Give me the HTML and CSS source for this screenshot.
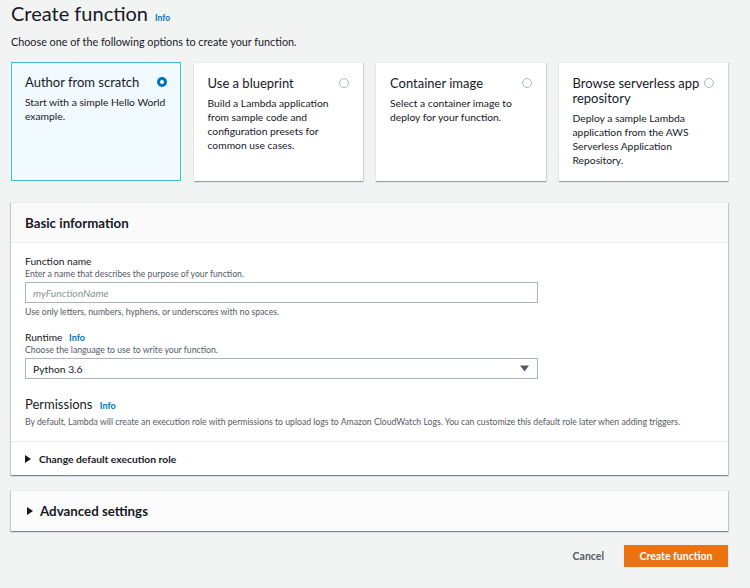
FILE: index.html
```html
<!DOCTYPE html>
<html lang="en">
<head>
<meta charset="utf-8">
<title>Create function</title>
<link rel="stylesheet" href="styles.css">
</head>
<body>
<div class="page">
  <header class="page-head">
    <h1 class="title">Create function <a class="info info-title" href="#">Info</a></h1>
    <p class="subtitle">Choose one of the following options to create your function.</p>
  </header>

  <div class="tiles">
    <div class="tile selected">
      <div class="tile-head">
        <span class="tile-title">Author from scratch</span>
        <span class="radio on"></span>
      </div>
      <p class="tile-desc">Start with a simple Hello World example.</p>
    </div>
    <div class="tile">
      <div class="tile-head">
        <span class="tile-title">Use a blueprint</span>
        <span class="radio"></span>
      </div>
      <p class="tile-desc">Build a Lambda application from sample code and configuration presets for common use cases.</p>
    </div>
    <div class="tile">
      <div class="tile-head">
        <span class="tile-title">Container image</span>
        <span class="radio"></span>
      </div>
      <p class="tile-desc">Select a container image to deploy for your function.</p>
    </div>
    <div class="tile">
      <div class="tile-head">
        <span class="tile-title">Browse serverless app repository</span>
        <span class="radio"></span>
      </div>
      <p class="tile-desc">Deploy a sample Lambda application from the AWS Serverless Application Repository.</p>
    </div>
  </div>

  <section class="panel basic">
    <div class="panel-head">
      <h2 class="panel-title">Basic information</h2>
    </div>
    <div class="panel-body">
      <div class="field">
        <div class="label">Function name</div>
        <div class="hint">Enter a name that describes the purpose of your function.</div>
        <div class="input placeholder">myFunctionName</div>
        <div class="hint constraint">Use only letters, numbers, hyphens, or underscores with no spaces.</div>
      </div>
      <div class="field runtime">
        <div class="label">Runtime <a class="info" href="#">Info</a></div>
        <div class="hint">Choose the language to use to write your function.</div>
        <div class="input select">
          <span>Python 3.6</span>
          <svg class="caret" width="9" height="7" viewBox="0 0 9 7"><path d="M0 0.5 H9 L4.5 6.5 Z" fill="#545b64"/></svg>
        </div>
      </div>
      <div class="perm">
        <div class="perm-title">Permissions <a class="info" href="#">Info</a></div>
        <div class="hint perm-desc">By default, Lambda will create an execution role with permissions to upload logs to Amazon CloudWatch Logs. You can customize this default role later when adding triggers.</div>
      </div>
    </div>
    <div class="expander">
      <svg class="tri" width="6" height="8" viewBox="0 0 6 8"><path d="M0 0 L6 4 L0 8 Z" fill="#16191f"/></svg>
      <span>Change default execution role</span>
    </div>
  </section>

  <section class="panel advanced">
    <svg class="tri" width="6" height="8" viewBox="0 0 6 8"><path d="M0 0 L6 4 L0 8 Z" fill="#16191f"/></svg>
    <span>Advanced settings</span>
  </section>

  <div class="actions">
    <a class="btn-link" href="#">Cancel</a>
    <a class="btn-primary" href="#">Create function</a>
  </div>
</div>
</body>
</html>
```

FILE: styles.css
```css
* { box-sizing: border-box; }
html, body { margin: 0; padding: 0; }
body {
  background: #f2f3f3;
  color: #16191f;
  font-family: Lato, "Liberation Sans", Arial, sans-serif;
  width: 750px;
  height: 588px;
  overflow: hidden;
}
.page {
  padding: 0 22px 0 11px;
}
.page-head { padding-top: 1px; }
.title {
  margin: 0;
  font-size: 20px;
  font-weight: 400;
  line-height: 24px;
  height: 24px;
  display: flex;
  align-items: baseline;
  gap: 7px;
}
.info {
  color: #0073bb;
  font-weight: 700;
  font-size: 9px;
  text-decoration: none;
}
.info-title { font-size: 8.5px; }
.subtitle {
  margin: 10px 0 0;
  font-size: 10.8px;
  line-height: 14px;
}
.tiles {
  margin-top: 13px;
  display: grid;
  grid-template-columns: repeat(4, 1fr);
  gap: 13px;
  height: 119px;
}
.tile {
  background: #fff;
  padding: 13px 14px;
  box-shadow: 0 1px 1px 0 rgba(0, 28, 36, 0.3), 1px 1px 1px 0 rgba(0, 28, 36, 0.1);
  border-top: 1px solid #eaeded;
}
.tile.selected {
  background: #f1faff;
  border: 1px solid #44b9d6;
  box-shadow: none;
  padding: 12px 13px;
}
.tile-head {
  display: flex;
  justify-content: space-between;
  align-items: flex-start;
  gap: 4px;
}
.tile-title {
  font-size: 13px;
  line-height: 15px;
}
.radio {
  flex: none;
  width: 10px;
  height: 10px;
  border-radius: 50%;
  border: 1px solid #aab7b8;
  margin-top: 2px;
  background: #fff;
}
.radio.on {
  border: 3px solid #0073bb;
}
.tile-desc {
  margin: 5px 0 0;
  font-size: 10.3px;
  line-height: 14px;
}
.panel {
  background: #fff;
  box-shadow: 0 1px 1px 0 rgba(0, 28, 36, 0.3), 1px 1px 1px 0 rgba(0, 28, 36, 0.15), -1px 1px 1px 0 rgba(0, 28, 36, 0.15);
  border-top: 1px solid #eaeded;
}
.basic { margin-top: 21px; }
.panel-head {
  background: #fafafa;
  border-bottom: 1px solid #eaeded;
  height: 40px;
  display: flex;
  align-items: center;
  padding: 0 14px;
}
.panel-title {
  margin: 0;
  font-size: 13.3px;
  font-weight: 700;
}
.panel-body {
  padding: 12px 14px 14px;
  border-bottom: 1px solid #eaeded;
}
.label {
  font-size: 10.2px;
  line-height: 13px;
}
.label .info { margin-left: 4px; }
.hint {
  font-size: 8.7px;
  line-height: 11px;
  color: #545b64;
}
.input {
  width: 513px;
  height: 21px;
  border: 1px solid #aab7b8;
  margin-top: 3px;
  padding: 0 7px;
  display: flex;
  align-items: center;
  font-size: 10.3px;
  background: #fff;
}
.placeholder {
  color: #879596;
  font-style: italic;
}
.constraint { margin-top: 3px; }
.runtime { margin-top: 14px; }
.select {
  justify-content: space-between;
  padding-right: 8px;
}
.perm { margin-top: 17px; }
.perm-title {
  font-size: 13px;
  line-height: 16px;
}
.perm-title .info { margin-left: 4px; }
.perm-desc { margin-top: 2px; }
.expander {
  height: 33px;
  display: flex;
  align-items: center;
  gap: 8px;
  padding: 0 14px;
  font-size: 10.3px;
  font-weight: 700;
}
.tri { flex: none; }
.advanced {
  margin-top: 15px;
  height: 41px;
  display: flex;
  align-items: center;
  gap: 7px;
  padding: 0 14px 0 16px;
  font-size: 13.3px;
  font-weight: 700;
  background: #fcfcfc;
}
.actions {
  margin-top: 14px;
  display: flex;
  justify-content: flex-end;
  align-items: center;
  gap: 20px;
}
.btn-link {
  color: #545b64;
  font-weight: 700;
  font-size: 10.5px;
  text-decoration: none;
}
.btn-primary {
  background: #ec7211;
  color: #fff;
  font-weight: 700;
  font-size: 10.5px;
  text-decoration: none;
  width: 104px;
  height: 22px;
  display: flex;
  align-items: center;
  justify-content: center;
}
```
